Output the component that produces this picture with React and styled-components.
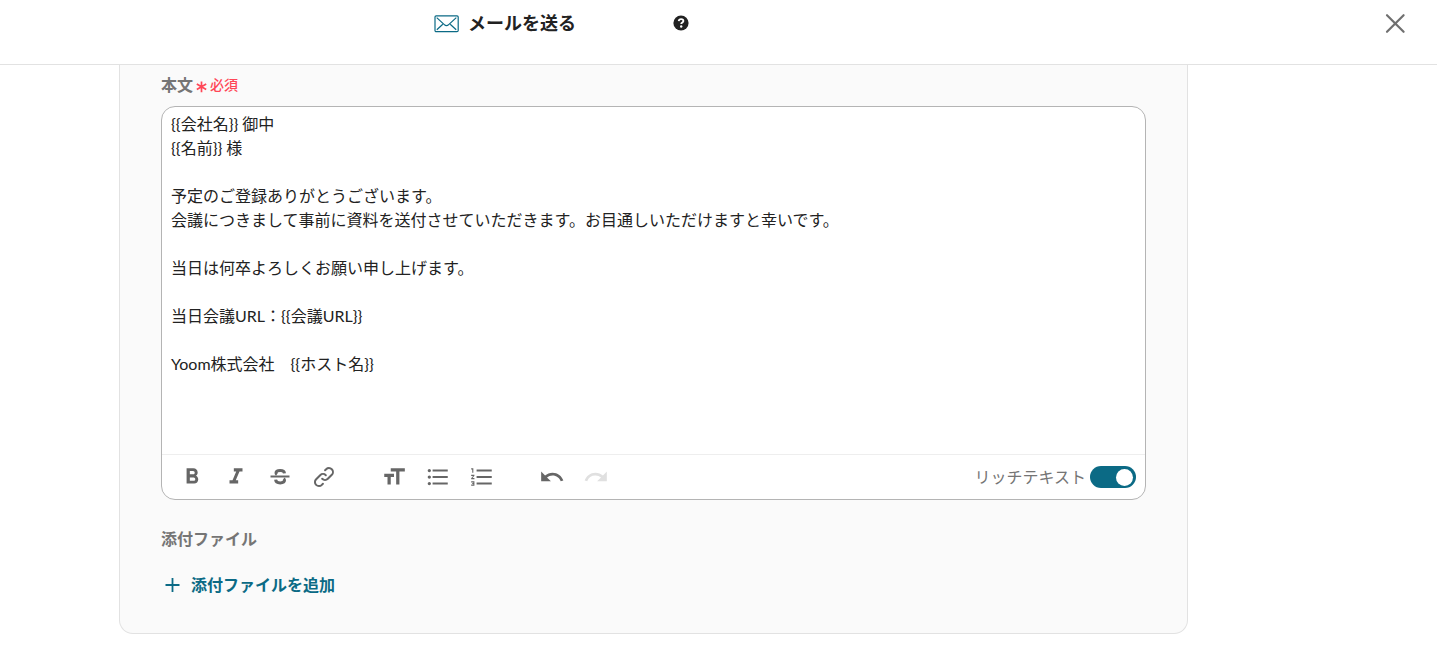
import React, { useState } from "react";
import styled, { createGlobalStyle } from "styled-components";
import {
  MdFormatBold,
  MdFormatItalic,
  MdFormatListBulleted,
  MdFormatListNumbered,
  MdFormatSize,
  MdRedo,
  MdUndo
} from "react-icons/md";
import { HiOutlineLink } from "react-icons/hi";

const Colors = {
  primary: "#0b6a85",
  text: "#222222",
  label: "#757575",
  icon: "#666666",
  required: "#ff4757",
  border: "#e2e2e2",
  inputBorder: "#b4b4b4",
  panel: "#fafafa"
};

const GlobalStyle = createGlobalStyle`
  * {
    box-sizing: border-box;
  }
  body {
    margin: 0;
    background: #ffffff;
    color: ${Colors.text};
    font-family: Lato, "Noto Sans CJK JP", sans-serif;
    font-size: 16px;
    line-height: 24px;
  }
  button, textarea {
    font: inherit;
  }
  button {
    border: 0;
    padding: 0;
    background: none;
    cursor: pointer;
  }
  svg {
    display: block;
  }
`;

const Header = styled.header`
  display: flex;
  align-items: flex-start;
  height: 65px;
  padding: 11px 30px 0 434px;
  border-bottom: 1px solid ${Colors.border};
`;

const Title = styled.h1`
  display: flex;
  align-items: center;
  gap: 9px;
  margin: 0;
  font-size: 18px;
  line-height: 24px;
`;

const HelpButton = styled.button`
  margin: 4px 0 0 97px;
`;

const CloseButton = styled.button`
  margin: 0 0 0 auto;
`;

const Panel = styled.main`
  margin: 0 249px 28px 119px;
  padding: 8px 41px 36px;
  border: 1px solid ${Colors.border};
  border-top: 0;
  border-radius: 0 0 14px 14px;
  background: ${Colors.panel};
`;

const FieldLabel = styled.label`
  display: flex;
  align-items: center;
  gap: 3px;
  color: ${Colors.label};
  font-weight: bold;
`;

const Required = styled.span`
  display: flex;
  align-items: center;
  gap: 3px;
  color: ${Colors.required};
  font-size: 14px;
  font-weight: 500;
`;

const Editor = styled.div`
  margin-top: 9px;
  border: 1px solid ${Colors.inputBorder};
  border-radius: 14px;
  background: #ffffff;
  overflow: hidden;
`;

const Body = styled.textarea`
  display: block;
  width: 100%;
  height: 347px;
  padding: 5px 9px;
  border: 0;
  outline: 0;
  resize: none;
  background: transparent;
  color: ${Colors.text};
`;

const Toolbar = styled.div`
  display: flex;
  align-items: center;
  gap: 26px;
  height: 45px;
  padding: 0 9px 0 8px;
  border-top: 1px solid #eeeeee;
`;

const ToolGroup = styled.div`
  display: flex;
`;

const Tool = styled.button`
  display: flex;
  align-items: center;
  justify-content: center;
  width: 44px;
  height: 44px;
  color: ${Colors.icon};
  &:disabled {
    color: #e0e0e0;
    cursor: default;
  }
`;

const SwitchLabel = styled.label`
  display: flex;
  align-items: center;
  gap: 4px;
  margin-left: auto;
  color: ${Colors.label};
`;

const Switch = styled.input`
  appearance: none;
  display: flex;
  align-items: center;
  width: 46px;
  height: 22px;
  margin: 0;
  padding: 0 3px;
  border-radius: 11px;
  background: #bdbdbd;
  cursor: pointer;
  &::before {
    content: "";
    width: 17px;
    height: 17px;
    border-radius: 50%;
    background: #ffffff;
  }
  &:checked {
    justify-content: flex-end;
    background: ${Colors.primary};
  }
`;

const Attachments = styled.section`
  margin-top: 27px;
`;

const SectionTitle = styled.h2`
  margin: 0;
  color: ${Colors.label};
  font-size: 16px;
  line-height: 24px;
`;

const AddButton = styled.button`
  display: flex;
  align-items: center;
  gap: 11px;
  margin-top: 22px;
  padding-left: 3px;
  color: ${Colors.primary};
  font-weight: bold;
`;

const MailIcon = () => (
  <svg width="25" height="20" viewBox="0 -1 25 20" fill="none" stroke={Colors.primary} strokeWidth="1.2">
    <rect x="1" y="1.8" width="23.2" height="15.8" rx="1.2" />
    <path d="M2.7 3.6l7.6 7c1.4 1.3 3 1.3 4.4 0l7.6-7M2.8 15.8l6-5.6M22.2 15.8l-6-5.6" />
  </svg>
);

const HelpIcon = () => (
  <svg width="16" height="16" viewBox="0 0 16 16" fill="none">
    <circle cx="8" cy="8" r="7.6" fill={Colors.text} />
    <path d="M5.7 6.2c.2-1.4 1.1-2.1 2.4-2.1 1.4 0 2.3.7 2.3 1.8 0 1.6-2.2 1.5-2.2 3.1" stroke="#fff" strokeWidth="1.8" />
    <circle cx="8.2" cy="11.5" r="1.2" fill="#fff" />
  </svg>
);

const CloseIcon = () => (
  <svg width="24" height="24" viewBox="0 0 24 24" stroke="#707070" strokeWidth="2.2" strokeLinecap="round">
    <path d="M4 4.2l16.6 16.6M20.6 4.2L4 20.8" />
  </svg>
);

const AsteriskIcon = () => (
  <svg width="11" height="16" viewBox="0 0 11 16" stroke="currentColor" strokeWidth="1.7">
    <path d="M5.5 4.4v10.8M.8 7.1l9.4 5.4M10.2 7.1l-9.4 5.4" />
  </svg>
);

const StrikeIcon = ({ size }) => (
  <svg width={size} height={size} viewBox="0 0 26 26" fill="none" stroke="currentColor">
    <path d="M3.5 12.5h19" strokeWidth="2" />
    <path d="M17.5 9.4c-.2-1.9-1.7-2.8-4.3-2.8-2.6 0-4.2.9-4.2 2.4 0 .6.3 1 .9 1.4" strokeWidth="3" />
    <path d="M8.6 15.6c.2 2.2 1.8 3.3 4.6 3.3 2.8 0 4.3-1 4.3-2.6 0-.7-.3-1.2-.9-1.6" strokeWidth="3" />
  </svg>
);

const PlusIcon = () => (
  <svg width="16" height="16" viewBox="0 0 16 16" stroke="currentColor" strokeWidth="1.8">
    <path d="M8.5 1v14M1.5 8h14" />
  </svg>
);

const template = `{{会社名}} 御中
{{名前}} 様

予定のご登録ありがとうございます。
会議につきまして事前に資料を送付させていただきます。お目通しいただけますと幸いです。

当日は何卒よろしくお願い申し上げます。

当日会議URL：{{会議URL}}

Yoom株式会社　{{ホスト名}}`;

const toolGroups = [
  [
    { name: "太字", icon: MdFormatBold },
    { name: "斜体", icon: MdFormatItalic },
    { name: "取り消し線", icon: StrikeIcon },
    { name: "リンク", icon: HiOutlineLink, size: 24 }
  ],
  [
    { name: "文字サイズ", icon: MdFormatSize },
    { name: "箇条書き", icon: MdFormatListBulleted },
    { name: "番号付きリスト", icon: MdFormatListNumbered }
  ],
  [
    { name: "元に戻す", icon: MdUndo },
    { name: "やり直す", icon: MdRedo, disabled: true }
  ]
];

const App = () => {
  const [body, setBody] = useState(template);
  const [richText, setRichText] = useState(true);

  return (
    <>
      <GlobalStyle />
      <Header>
        <Title>
          <MailIcon />
          メールを送る
        </Title>
        <HelpButton type="button" aria-label="ヘルプ">
          <HelpIcon />
        </HelpButton>
        <CloseButton type="button" aria-label="閉じる">
          <CloseIcon />
        </CloseButton>
      </Header>
      <Panel>
        <FieldLabel htmlFor="body">
          本文
          <Required>
            <AsteriskIcon />
            必須
          </Required>
        </FieldLabel>
        <Editor>
          <Body
            id="body"
            spellCheck={false}
            value={body}
            onChange={e => setBody(e.target.value)}
          />
          <Toolbar>
            {toolGroups.map((tools, i) => (
              <ToolGroup key={i}>
                {tools.map(({ name, icon: Icon, size = 26, disabled }) => (
                  <Tool key={name} type="button" aria-label={name} disabled={disabled}>
                    <Icon size={size} />
                  </Tool>
                ))}
              </ToolGroup>
            ))}
            <SwitchLabel>
              リッチテキスト
              <Switch
                type="checkbox"
                role="switch"
                checked={richText}
                onChange={e => setRichText(e.target.checked)}
              />
            </SwitchLabel>
          </Toolbar>
        </Editor>
        <Attachments>
          <SectionTitle>添付ファイル</SectionTitle>
          <AddButton type="button">
            <PlusIcon />
            添付ファイルを追加
          </AddButton>
        </Attachments>
      </Panel>
    </>
  );
};

export default App;
